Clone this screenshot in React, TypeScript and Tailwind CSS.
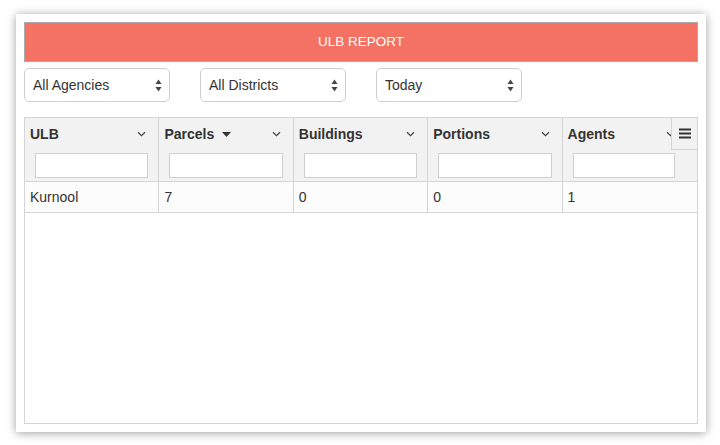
import { memo } from "react";

const columns = ["ULB", "Parcels", "Buildings", "Portions", "Agents"];
const row = ["Kurnool", "7", "0", "0", "1"];
const filters = ["All Agencies", "All Districts", "Today"];

function Chevron() {
  return (
    <svg width="9" height="6" viewBox="0 0 9 6" className="shrink-0">
      <path d="M1 1.2 L4.5 4.6 L8 1.2" fill="none" stroke="#444" strokeWidth="1.2" />
    </svg>
  );
}

function UpDown() {
  return (
    <svg width="7" height="13" viewBox="0 0 7 13">
      <path d="M3.5 0.5 L6.5 5 L0.5 5 Z" fill="#444" />
      <path d="M0.5 8 L6.5 8 L3.5 12.5 Z" fill="#444" />
    </svg>
  );
}

function FakeSelect({ label }: { label: string }) {
  return (
    <div className="w-[146px] h-[34px] rounded-[5px] border border-[#cfcfcf] bg-white flex items-center justify-between pl-[8px] pr-[7px] text-[14px] text-[#333]">
      <span>{label}</span>
      <UpDown />
    </div>
  );
}

function App() {
  return (
    <div
      className="w-[720px] h-[445px] bg-white pt-[14px] pl-[16px]"
      style={{ fontFamily: '"Liberation Sans", Arial, sans-serif' }}
    >
      <div className="w-[690px] h-[418px] bg-white p-[8px] shadow-[0_1px_9px_rgba(0,0,0,0.38)] flex flex-col">
        <div className="h-[40px] border border-[#a9a9a9] bg-[#f47263] flex items-center justify-center text-white text-[13.5px]">
          ULB REPORT
        </div>

        <div className="mt-[6px] flex gap-[30px]">
          {filters.map((f) => (
            <FakeSelect key={f} label={f} />
          ))}
        </div>

        <div className="mt-[15px] flex-1 border border-[#d4d4d4] relative text-[14px] text-[#333]">
          <div className="grid grid-cols-5 bg-[#f2f2f2] border-b border-[#d4d4d4]">
            {columns.map((c, i) => (
              <div
                key={c}
                className={`flex flex-col ${i < 4 ? "border-r border-[#d4d4d4]" : ""}`}
              >
                <div
                  className={`h-[32px] flex items-center justify-between pl-[5px] ${i === 4 ? "pr-[22px]" : "pr-[12px]"}`}
                >
                  <span className="font-bold flex items-center gap-[8px]">
                    {c}
                    {c === "Parcels" && (
                      <svg width="9" height="5" viewBox="0 0 9 5">
                        <path d="M0 0 L9 0 L4.5 5 Z" fill="#333" />
                      </svg>
                    )}
                  </span>
                  <Chevron />
                </div>
                <div className="h-[31px] pt-[3px] pl-[10px] pr-[10px]">
                  <div
                    className={`h-[25px] bg-white border border-[#cfcfcf] ${i === 4 ? "mr-[12px]" : ""}`}
                  />
                </div>
              </div>
            ))}
          </div>

          <div className="grid grid-cols-5 bg-[#fcfcfc] border-b border-[#d4d4d4] h-[31px]">
            {row.map((v, i) => (
              <div
                key={i}
                className={`flex items-center pl-[5px] ${i < 4 ? "border-r border-[#d4d4d4]" : ""}`}
              >
                {v}
              </div>
            ))}
          </div>

          <div className="absolute top-0 right-0 w-[26px] h-[32px] bg-[#f2f2f2] border-l border-b border-[#d4d4d4] flex items-center justify-center">
            <svg width="12" height="11" viewBox="0 0 12 11">
              <rect x="0" y="0.5" width="12" height="2" fill="#333" />
              <rect x="0" y="4.5" width="12" height="2" fill="#333" />
              <rect x="0" y="8.5" width="12" height="2" fill="#333" />
            </svg>
          </div>
        </div>
      </div>
    </div>
  );
}

export default memo(App);
